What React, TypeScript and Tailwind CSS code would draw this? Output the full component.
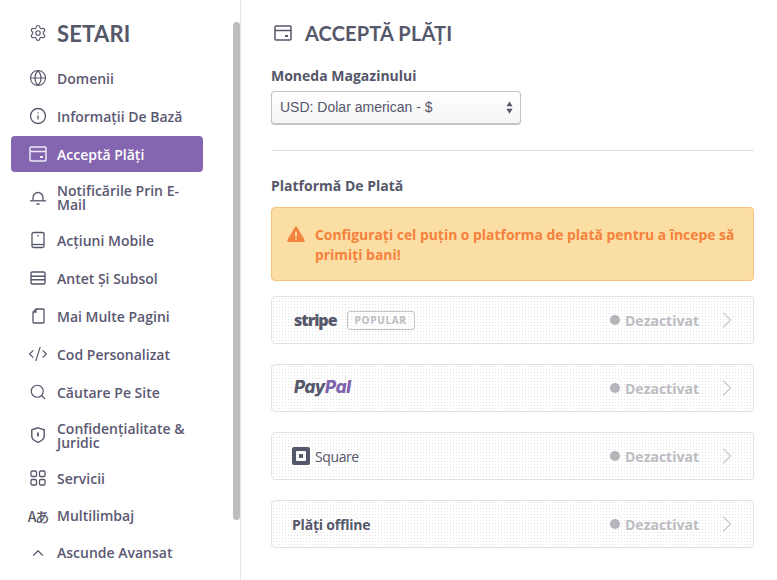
import React from "react";
import { ChevronRight, ChevronUp, CodeXml, Globe, Info, Search, Settings } from "lucide-react";

const sans = "font-['Open_Sans',sans-serif]";
const dots = "bg-[radial-gradient(#e3e3e3_0.55px,transparent_0.75px)] bg-[length:3px_3px]";

function CardIcon({ className }: { className?: string }) {
  return (
    <svg viewBox="0 0 18 16" fill="none" stroke="currentColor" strokeWidth="1.5" className={className}>
      <rect x="1" y="1" width="16" height="14" rx="1" />
      <path d="M1 5.5h16" />
      <path d="M11 11h3" strokeWidth="2" />
    </svg>
  );
}

function BellIcon() {
  return (
    <svg viewBox="0 0 18 18" fill="none" stroke="currentColor" strokeWidth="1.3" className="w-[18px] h-[18px]">
      <path d="M4 12.5V9.5a5 5 0 0 1 10 0v3" />
      <path d="M1 12.8h16" />
      <path d="M7.5 16h3" strokeWidth="1.5" />
    </svg>
  );
}

function TabletIcon() {
  return (
    <svg viewBox="0 0 18 18" fill="none" stroke="currentColor" strokeWidth="1.3" className="w-[18px] h-[18px]">
      <rect x="3" y="1.5" width="12" height="15" rx="1.5" />
      <path d="M3 13.5h12" />
      <path d="M9 4v1.5" />
    </svg>
  );
}

function LayoutIcon() {
  return (
    <svg viewBox="0 0 18 18" fill="none" stroke="currentColor" strokeWidth="1.4" className="w-[18px] h-[18px]">
      <rect x="2" y="3" width="14" height="12" rx="1.5" />
      <path d="M2 7.2h14M2 10.8h14" />
    </svg>
  );
}

function PageIcon() {
  return (
    <svg viewBox="0 0 18 18" fill="none" stroke="currentColor" strokeWidth="1.3" className="w-[18px] h-[18px]">
      <path d="M7 2h7a1 1 0 0 1 1 1v12a1 1 0 0 1-1 1H5a1 1 0 0 1-1-1V5z" />
      <path d="M7 2v3H4" />
    </svg>
  );
}

function ShieldIcon() {
  return (
    <svg viewBox="0 0 18 18" fill="none" stroke="currentColor" strokeWidth="1.4" className="w-[18px] h-[18px]">
      <path d="M9 1.8l6.200 2v6.500c0 2.500-2.800 4.700-6.200 6-3.400-1.300-6.200-3.500-6.200-6V3.800z" />
      <path d="M9 6.500v4" strokeWidth="1.800" />
    </svg>
  );
}

function GridIcon() {
  return (
    <svg viewBox="0 0 18 18" fill="none" stroke="currentColor" strokeWidth="1.3" className="w-[18px] h-[18px]">
      <rect x="2" y="2" width="5.500" height="5.500" rx="1.200" />
      <rect x="10.500" y="2" width="5.500" height="5.500" rx="1.200" />
      <rect x="2" y="10.500" width="5.500" height="5.500" rx="1.200" />
      <rect x="10.500" y="10.500" width="5.500" height="5.500" rx="1.200" />
    </svg>
  );
}

function WarningIcon() {
  return (
    <svg viewBox="0 0 18 16" className="w-[18px] h-[16px] shrink-0 self-start mt-[18px]">
      <path d="M9 .5a1.300 1.300 0 0 1 1.100.7l7.500 12.900a1.300 1.300 0 0 1-1.100 1.900h-15a1.300 1.300 0 0 1-1.100-1.900L7.900 1.200A1.300 1.300 0 0 1 9 .5z" fill="#f5813c" />
      <path d="M9 5.500v5" stroke="#fbdea4" strokeWidth="1.800" />
      <path d="M9 11.800v1.800" stroke="#fbdea4" strokeWidth="1.800" />
    </svg>
  );
}

const lucideCls = "w-[18px] h-[18px]";

const navItems: { label: string; icon: React.ReactNode; active?: boolean; height: string }[] = [
  { label: "Domenii", icon: <Globe className={lucideCls} strokeWidth={1.5} />, height: "h-[36px]" },
  { label: "Informații De Bază", icon: <Info className={lucideCls} strokeWidth={1.7} />, height: "h-[36px]" },
  { label: "Acceptă Plăți", icon: <CardIcon className="w-[18px] h-[16px]" />, active: true, height: "h-[36px]" },
  { label: "Notificările Prin E-Mail", icon: <BellIcon />, height: "h-[46px]" },
  { label: "Acțiuni Mobile", icon: <TabletIcon />, height: "h-[36px]" },
  { label: "Antet Și Subsol", icon: <LayoutIcon />, height: "h-[36px]" },
  { label: "Mai Multe Pagini", icon: <PageIcon />, height: "h-[36px]" },
  { label: "Cod Personalizat", icon: <CodeXml className="w-[20px] h-[20px] shrink-0" strokeWidth={1.4} />, height: "h-[36px]" },
  { label: "Căutare Pe Site", icon: <Search className={lucideCls} strokeWidth={1.5} />, height: "h-[36px]" },
  { label: "Confidențialitate & Juridic", icon: <ShieldIcon />, height: "h-[46px]" },
  { label: "Servicii", icon: <GridIcon />, height: "h-[36px]" },
  {
    label: "Multilimbaj",
    icon: <span className="text-[14px] leading-none whitespace-nowrap font-['Noto_Sans_CJK_JP',sans-serif] font-medium tracking-[-1px]">Aあ</span>,
    height: "h-[35px]",
  },
  { label: "Ascunde Avansat", icon: <ChevronUp className={lucideCls} strokeWidth={1.5} />, height: "h-[35px]" },
];

function Sidebar() {
  return (
    <aside className="w-[241px] shrink-0 flex border-r border-[#e6e6e6] h-full overflow-hidden">
      <nav className="w-[233px] shrink-0 pl-[11px] pr-[30px] pt-[20px]">
        <div className="flex items-center gap-[10px] pl-[18px] h-[26px] mb-[14px] text-[#55576a]">
          <Settings className="w-[18px] h-[18px]" strokeWidth={1.5} />
          <span className="font-['Lato',sans-serif] font-bold text-[22px] tracking-[0.2px]">SETARI</span>
        </div>
        <ul className="flex flex-col gap-[2px]">
          {navItems.map((item) => (
            <li
              key={item.label}
              className={`flex items-center gap-[10px] pl-[18px] pr-[10px] rounded-[4px] ${item.height} ${
                item.active ? "bg-[#8465b0] text-white" : "text-[#5b5872]"
              }`}
            >
              <span className={`w-[18px] shrink-0 flex items-center justify-center ${item.active ? "text-[#eeeaf5]" : "text-[#55576a]"}`}>
                {item.icon}
              </span>
              <span className={`${sans} text-[14px] font-semibold leading-[14px] pt-[1px]`}>{item.label}</span>
            </li>
          ))}
        </ul>
      </nav>
      <div className="w-[7px] mt-[22px] h-[498px] rounded-[4px] bg-[#bdbdbd]" />
    </aside>
  );
}

function Gateway({ logo }: { logo: React.ReactNode }) {
  return (
    <div className={`h-[48px] flex items-center border-[1.5px] border-[#e2e2e2] rounded-[4px] pl-[21px] pr-[12px] ${dots}`}>
      <div className="flex-1 flex items-center gap-[10px]">{logo}</div>
      <span className="w-[10px] h-[10px] rounded-full bg-[#b4b4ba] mr-[5px]" />
      <span className={`${sans} text-[14px] font-bold text-[#bcbcc2] w-[75px] whitespace-nowrap`}>Dezactivat</span>
      <ChevronRight className="w-[28px] h-[28px] ml-[13px] text-[#cacaca]" strokeWidth={1} />
    </div>
  );
}

export default function App() {
  return (
    <div className="w-[777px] h-[580px] flex bg-white overflow-hidden">
      <Sidebar />
      <main className="flex-1 pl-[30px] pr-[23px] pt-[20px]">
        <div className="flex items-center h-[26px] text-[#55576a] mb-[20px]">
          <CardIcon className="w-[18px] h-[16px] ml-[3px] mr-[13px]" />
          <h1 className="font-['Lato',sans-serif] font-bold text-[20px] tracking-[0.15px]">ACCEPTĂ PLĂȚI</h1>
        </div>

        <label className={`${sans} block text-[14px] font-bold text-[#55576a] leading-[20px] mb-[5px]`}>Moneda Magazinului</label>
        <div className="w-[250px] h-[34px] border border-[#c4c4c4] border-b-2 rounded-[4px] flex items-center pl-[8px] pr-[7px] bg-gradient-to-b from-white to-[#f5f5f5]">
          <span className="flex-1 font-['Liberation_Sans',sans-serif] text-[14px] text-[#55576a]">USD: Dolar american - $</span>
          <svg viewBox="0 0 8 14" className="w-[7px] h-[13px] fill-[#55576a]">
            <path d="M4 0l3.500 5.500h-7zM4 14L.5 8.500h7z" />
          </svg>
        </div>

        <hr className="border-0 h-[1px] bg-[#e2e2e2] mt-[25px] mb-[25px]" />

        <p className={`${sans} text-[14px] font-bold text-[#55576a] leading-[20px] mb-[11px]`}>Platformă De Plată</p>

        <div className="h-[74px] flex items-center gap-[10px] pl-[15px] pr-[14px] rounded-[4px] border border-[#f7c27a] bg-[#fbdea4] mb-[15px]">
          <WarningIcon />
          <p className={`${sans} text-[13.9px] font-bold leading-[20px] pt-[2px] text-[#f5813c]`}>
            Configurați cel puțin o platforma de plată pentru a începe să primiți bani!
          </p>
        </div>

        <div className="flex flex-col gap-[20px]">
          <Gateway
            logo={
              <>
                <span className={`${sans} text-[16px] font-extrabold tracking-[-1px] text-[#55576a] ml-[1px]`}>stripe</span>
                <span className={`${sans} text-[10px] font-bold tracking-[0.7px] leading-[17px] px-[7px] border-[1.5px] border-[#c4c4c4] rounded-[3px] text-[#bcbcc2]`}>POPULAR</span>
              </>
            }
          />
          <Gateway
            logo={
              <span className="font-['Inter',sans-serif] text-[17px] font-extrabold italic tracking-[-0.3px] ml-[1px]">
                <span className="text-[#55576a]">Pay</span>
                <span className="text-[#7d63ad]">Pal</span>
              </span>
            }
          />
          <Gateway
            logo={
              <span className="flex items-center gap-[5px] -ml-[1px]">
                <span className="w-[18px] h-[18px] rounded-[2px] bg-[#55576a] flex items-center justify-center">
                  <span className="w-[10px] h-[10px] rounded-[1px] bg-white flex items-center justify-center">
                    <span className="w-[4px] h-[4px] bg-[#55576a]" />
                  </span>
                </span>
                <span className={`${sans} text-[14px] tracking-[-0.4px] text-[#55576a]`}>Square</span>
              </span>
            }
          />
          <Gateway logo={<span className={`${sans} text-[14px] font-bold tracking-[-0.2px] text-[#55576a] -ml-[1px]`}>Plăți offline</span>} />
        </div>
      </main>
    </div>
  );
}
